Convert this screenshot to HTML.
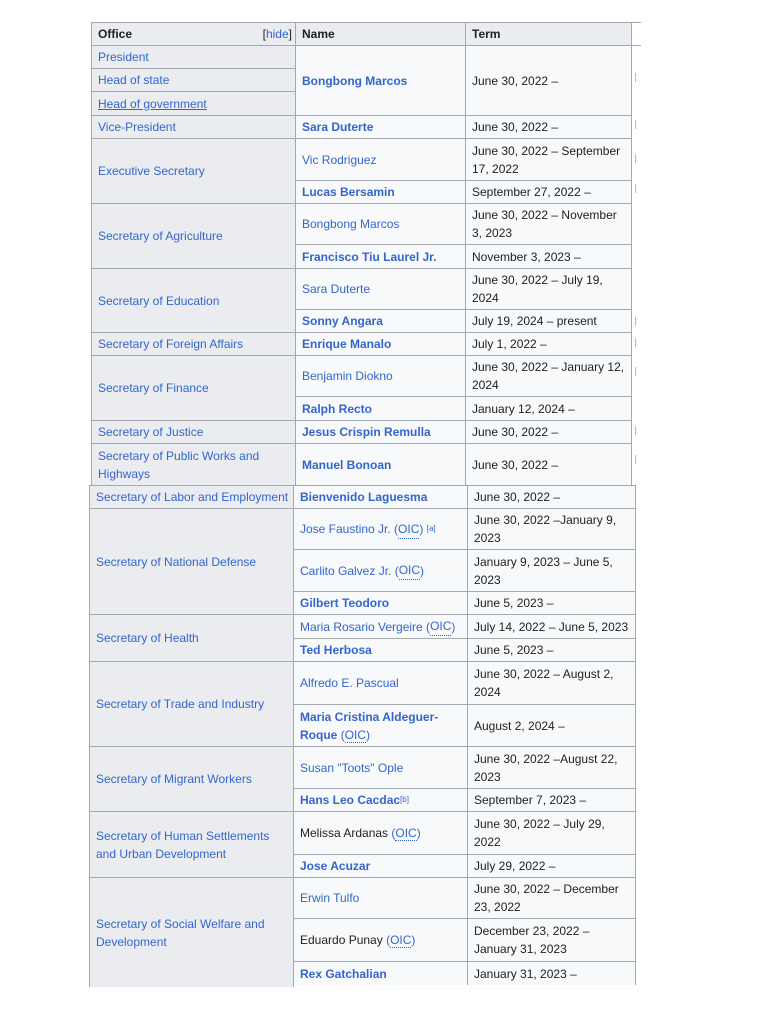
<!DOCTYPE html>
<html><head><meta charset="utf-8"><style>
body{margin:0;width:768px;height:1024px;background:#fff;position:relative;overflow:hidden;font-family:"Liberation Sans",sans-serif;font-size:12px;color:#202122}
.c{position:absolute;box-sizing:border-box;border:1px solid #a2a9b1;display:flex;align-items:center;padding:0 3px 0 6px;line-height:18px;background:#f8f9fa}
.o{background:#eaecf0;color:#3366cc}
.h{background:#eaecf0;font-weight:bold;color:#202122;border-width:1px}
.a{color:#3366cc}
.b{color:#3366cc;font-weight:bold}
.u{text-decoration:underline}
.oic{border-bottom:1px dotted #3366cc}
sup{font-size:8px;vertical-align:6px;color:#3366cc}
.m{position:absolute;width:1px;height:9px;background:#a8bde8}
</style></head><body>
<!-- top section -->
<div class="c h" style="left:91px;top:22px;width:205px;height:24px;justify-content:space-between">Office<span style="font-weight:normal;color:#202122">[<span class="a">hide</span>]</span></div>
<div class="c h" style="left:295px;top:22px;width:171px;height:24px">Name</div>
<div class="c h" style="left:465px;top:22px;width:167px;height:24px">Term</div>
<div class="c h" style="left:631px;top:22px;width:6px;height:24px;border-right:none;background:#fff"></div>

<div class="c o" style="left:91px;top:45px;width:205px;height:24px">President</div>
<div class="c o" style="left:91px;top:68px;width:205px;height:24px">Head of state</div>
<div class="c o u" style="left:91px;top:91px;width:205px;height:25px"><span class="u">Head of government</span></div>
<div class="c b" style="left:295px;top:45px;width:171px;height:71px">Bongbong Marcos</div>
<div class="c" style="left:465px;top:45px;width:167px;height:71px">June 30, 2022 –</div>

<div class="c o" style="left:91px;top:115px;width:205px;height:24px">Vice-President</div>
<div class="c b" style="left:295px;top:115px;width:171px;height:24px">Sara Duterte</div>
<div class="c" style="left:465px;top:115px;width:167px;height:24px">June 30, 2022 –</div>

<div class="c o" style="left:91px;top:138px;width:205px;height:66px">Executive Secretary</div>
<div class="c a" style="left:295px;top:138px;width:171px;height:43px">Vic Rodriguez</div>
<div class="c" style="left:465px;top:138px;width:167px;height:43px">June 30, 2022 – September 17, 2022</div>
<div class="c b" style="left:295px;top:180px;width:171px;height:24px">Lucas Bersamin</div>
<div class="c" style="left:465px;top:180px;width:167px;height:24px">September 27, 2022 –</div>

<div class="c o" style="left:91px;top:203px;width:205px;height:66px">Secretary of Agriculture</div>
<div class="c a" style="left:295px;top:203px;width:171px;height:42px">Bongbong Marcos</div>
<div class="c" style="left:465px;top:203px;width:167px;height:42px">June 30, 2022 – November 3, 2023</div>
<div class="c b" style="left:295px;top:244px;width:171px;height:25px">Francisco Tiu Laurel Jr.</div>
<div class="c" style="left:465px;top:244px;width:167px;height:25px">November 3, 2023 –</div>

<div class="c o" style="left:91px;top:268px;width:205px;height:65px">Secretary of Education</div>
<div class="c a" style="left:295px;top:268px;width:171px;height:42px">Sara Duterte</div>
<div class="c" style="left:465px;top:268px;width:167px;height:42px">June 30, 2022 – July 19, 2024</div>
<div class="c b" style="left:295px;top:309px;width:171px;height:24px">Sonny Angara</div>
<div class="c" style="left:465px;top:309px;width:167px;height:24px">July 19, 2024 – present</div>

<div class="c o" style="left:91px;top:332px;width:205px;height:24px">Secretary of Foreign Affairs</div>
<div class="c b" style="left:295px;top:332px;width:171px;height:24px">Enrique Manalo</div>
<div class="c" style="left:465px;top:332px;width:167px;height:24px">July 1, 2022 –</div>

<div class="c o" style="left:91px;top:355px;width:205px;height:66px">Secretary of Finance</div>
<div class="c a" style="left:295px;top:355px;width:171px;height:42px">Benjamin Diokno</div>
<div class="c" style="left:465px;top:355px;width:167px;height:42px">June 30, 2022 – January 12, 2024</div>
<div class="c b" style="left:295px;top:396px;width:171px;height:25px">Ralph Recto</div>
<div class="c" style="left:465px;top:396px;width:167px;height:25px">January 12, 2024 –</div>

<div class="c o" style="left:91px;top:420px;width:205px;height:24px">Secretary of Justice</div>
<div class="c b" style="left:295px;top:420px;width:171px;height:24px">Jesus Crispin Remulla</div>
<div class="c" style="left:465px;top:420px;width:167px;height:24px">June 30, 2022 –</div>

<div class="c o" style="left:91px;top:443px;width:205px;height:43px">Secretary of Public Works and Highways</div>
<div class="c b" style="left:295px;top:443px;width:171px;height:43px">Manuel Bonoan</div>
<div class="c" style="left:465px;top:443px;width:167px;height:43px">June 30, 2022 –</div>
<div style="position:absolute;left:631px;top:45px;width:1px;height:440px;background:#a2a9b1"></div>
<div class="m" style="left:635px;top:73px"></div><div class="m" style="left:635px;top:120px"></div><div class="m" style="left:635px;top:154px"></div><div class="m" style="left:635px;top:184px"></div><div class="m" style="left:635px;top:317px"></div><div class="m" style="left:635px;top:338px"></div><div class="m" style="left:635px;top:367px"></div><div class="m" style="left:635px;top:426px"></div><div class="m" style="left:635px;top:455px"></div>

<!-- bottom section -->
<div class="c o" style="left:89px;top:485px;width:205px;height:24px;padding-left:6px">Secretary of Labor and Employment</div>
<div class="c b" style="left:293px;top:485px;width:175px;height:24px">Bienvenido Laguesma</div>
<div class="c" style="left:467px;top:485px;width:169px;height:24px">June 30, 2022 –</div>

<div class="c o" style="left:89px;top:508px;width:205px;height:107px">Secretary of National Defense</div>
<div class="c a" style="left:293px;top:508px;width:175px;height:42px">Jose Faustino Jr. (<span class="oic">OIC</span>)&nbsp;<sup>[a]</sup></div>
<div class="c" style="left:467px;top:508px;width:169px;height:42px">June 30, 2022 –January 9, 2023</div>
<div class="c a" style="left:293px;top:549px;width:175px;height:43px">Carlito Galvez Jr. (<span class="oic">OIC</span>)</div>
<div class="c" style="left:467px;top:549px;width:169px;height:43px">January 9, 2023 – June 5, 2023</div>
<div class="c b" style="left:293px;top:591px;width:175px;height:24px">Gilbert Teodoro</div>
<div class="c" style="left:467px;top:591px;width:169px;height:24px">June 5, 2023 –</div>

<div class="c o" style="left:89px;top:614px;width:205px;height:48px">Secretary of Health</div>
<div class="c a" style="left:293px;top:614px;width:175px;height:25px;white-space:nowrap">Maria Rosario Vergeire (<span class="oic">OIC</span>)</div>
<div class="c" style="left:467px;top:614px;width:169px;height:25px;white-space:nowrap">July 14, 2022 – June 5, 2023</div>
<div class="c b" style="left:293px;top:638px;width:175px;height:24px">Ted Herbosa</div>
<div class="c" style="left:467px;top:638px;width:169px;height:24px">June 5, 2023 –</div>

<div class="c o" style="left:89px;top:661px;width:205px;height:86px">Secretary of Trade and Industry</div>
<div class="c a" style="left:293px;top:661px;width:175px;height:44px">Alfredo E. Pascual</div>
<div class="c" style="left:467px;top:661px;width:169px;height:44px">June 30, 2022 – August 2, 2024</div>
<div class="c" style="left:293px;top:704px;width:175px;height:43px"><span><span class="b">Maria Cristina Aldeguer-Roque</span> <span class="a">(<span class="oic">OIC</span>)</span></span></div>
<div class="c" style="left:467px;top:704px;width:169px;height:43px">August 2, 2024 –</div>

<div class="c o" style="left:89px;top:746px;width:205px;height:66px">Secretary of Migrant Workers</div>
<div class="c a" style="left:293px;top:746px;width:175px;height:43px">Susan "Toots" Ople</div>
<div class="c" style="left:467px;top:746px;width:169px;height:43px">June 30, 2022 –August 22, 2023</div>
<div class="c b" style="left:293px;top:788px;width:175px;height:24px">Hans Leo Cacdac<sup style="font-weight:normal">[b]</sup></div>
<div class="c" style="left:467px;top:788px;width:169px;height:24px">September 7, 2023 –</div>

<div class="c o" style="left:89px;top:811px;width:205px;height:67px">Secretary of Human Settlements and Urban Development</div>
<div class="c" style="left:293px;top:811px;width:175px;height:44px">Melissa Ardanas&nbsp;<span class="a">(<span class="oic">OIC</span>)</span></div>
<div class="c" style="left:467px;top:811px;width:169px;height:44px">June 30, 2022 – July 29, 2022</div>
<div class="c b" style="left:293px;top:854px;width:175px;height:24px">Jose Acuzar</div>
<div class="c" style="left:467px;top:854px;width:169px;height:24px">July 29, 2022 –</div>

<div class="c o" style="left:89px;top:877px;width:205px;height:110px;border-bottom:none">Secretary of Social Welfare and Development</div>
<div class="c a" style="left:293px;top:877px;width:175px;height:42px">Erwin Tulfo</div>
<div class="c" style="left:467px;top:877px;width:169px;height:42px">June 30, 2022 – December 23, 2022</div>
<div class="c" style="left:293px;top:918px;width:175px;height:44px">Eduardo Punay&nbsp;<span class="a">(<span class="oic">OIC</span>)</span></div>
<div class="c" style="left:467px;top:918px;width:169px;height:44px">December 23, 2022 – January 31, 2023</div>
<div class="c b" style="left:293px;top:961px;width:175px;height:24px;border-bottom:none">Rex Gatchalian</div>
<div class="c" style="left:467px;top:961px;width:169px;height:24px;border-bottom:none">January 31, 2023 –</div>
</body></html>
